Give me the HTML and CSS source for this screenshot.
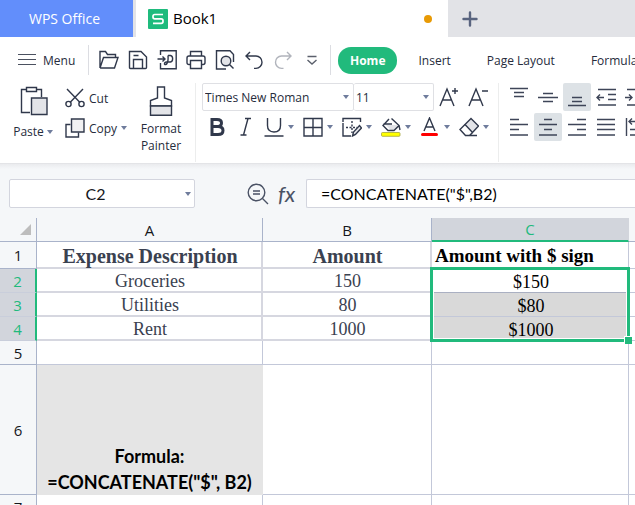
FILE: index.html
```html
<!DOCTYPE html>
<html lang="en">
<head>
<meta charset="utf-8">
<title>Book1 - WPS Office</title>
<link rel="stylesheet" href="styles.css">
</head>
<body>
<header class="tabbar">
  <button class="tab-home">WPS Office</button>
  <div class="tab-doc">
    <svg class="logo" width="20" height="20" viewBox="0 0 20 20"><rect width="20" height="20" rx="1" fill="#1fbb7d"/><path d="M15 5.500H6.800Q5 5.500 5 7.300V8Q5 9.800 6.800 9.800H13.200Q15 9.800 15 11.600V12.600Q15 14.400 13.200 14.400H5" fill="none" stroke="#fff" stroke-width="1.700"/></svg>
    <span>Book1</span>
    <i class="dot"></i>
  </div>
  <button class="tab-add" aria-label="New tab"><svg width="16" height="16" viewBox="0 0 16 16"><path d="M8 1.500V14.500M1.500 8H14.500" stroke="#59647f" stroke-width="2.400" stroke-linecap="round"/></svg></button>
</header>

<nav class="menubar">
  <button class="menu-btn"><svg width="18" height="14" viewBox="0 0 18 14"><path d="M0 1.500H18M0 6.500H18M0 11.500H18" stroke="#4b5160" stroke-width="1.200"/></svg>Menu</button>
  <div class="quick">
    <button aria-label="Open"><svg width="20" height="20" viewBox="0 0 20 20"><path d="M1 18V1.500H6.500L8.500 4.500H16.500V7.500M1 18L4.500 7.500H19L15.500 18H1"/></svg></button>
    <button aria-label="Save"><svg width="20" height="20" viewBox="0 0 20 20"><path d="M1.500 1.500H13L18.500 7V17.500Q18.500 18.500 17.500 18.500H2.500Q1.500 18.500 1.500 17.500ZM5.500 18.500V9.500H14.500V18.500M5.500 5.500H10.500"/></svg></button>
    <button aria-label="Export to PDF"><svg width="20" height="20" viewBox="0 0 20 20"><path d="M3.500 5V.8H19.200V18.800H3.500V13M.5 9H8M5.500 6.500L8 9L5.500 11.500M11 5.500H13.500A2.600 3.300 0 0 1 13.500 12H9.500Q7.500 12 7.500 14Q8.500 15.500 10 13.500Q11.500 11 11 5.500"/></svg></button>
    <button aria-label="Print"><svg width="20" height="20" viewBox="0 0 20 20"><path d="M4.500 6V1.500H15.500V6M4.500 14.500H3Q1 14.500 1 12.500V8Q1 6 3 6H17Q19 6 19 8V12.500Q19 14.500 17 14.500H15.500M4.500 10.500H15.500V18.500H4.500Z"/></svg></button>
    <button aria-label="Print preview"><svg width="20" height="20" viewBox="0 0 20 20"><path d="M11 19H1.500V.8H15L18.500 4.500V12"/><circle cx="11" cy="11" r="4.800" fill="#e3e4e8"/><path d="M14.500 14.500L18.500 18.500"/></svg></button>
    <button aria-label="Undo"><svg width="20" height="20" viewBox="0 0 20 20"><path d="M6 2L2 6L6 10M2 6H12A6 6.200 0 0 1 12 18.400H10"/></svg></button>
    <button aria-label="Redo" class="off"><svg width="20" height="20" viewBox="0 0 20 20"><path d="M14 2L18 6L14 10M18 6H8.500A6 6.200 0 0 0 8.500 18.400H10.500"/></svg></button>
    <button aria-label="More"><svg width="20" height="20" viewBox="0 0 20 20"><path d="M5.500 6.500H14.500M5.500 10L10 14L14.500 10" stroke="#5b606c"/></svg></button>
  </div>
  <div class="menus">
    <a href="#home" class="active">Home</a>
    <a href="#insert">Insert</a>
    <a href="#layout">Page Layout</a>
    <a href="#formulas">Formulas</a>
  </div>
</nav>

<section class="ribbon">
  <div class="group clip">
    <button class="big paste"><svg width="28" height="30" viewBox="0 0 28 30"><path d="M10 26.500H1.500V3.500H6M17 3.500H21.500V11M6.500 1.500H16.500V5.500H6.500Z"/><path d="M11.500 12H27V28.500H11.500Z" fill="#e3e4e8"/></svg><span>Paste<i class="caret"></i></span></button>
    <div class="pair">
      <button><svg width="20" height="20" viewBox="0 0 20 20"><path d="M2 1L15 14.500M18 1L5 14.500"/><circle cx="3.500" cy="16" r="2.600"/><circle cx="16.500" cy="16" r="2.600"/></svg>Cut</button>
      <button><svg width="20" height="20" viewBox="0 0 20 20"><path d="M5.500 6.500H1V19H13.500V14.500"/><path d="M6.500 1H19V14H6.500Z" fill="#f0f0f2"/></svg>Copy<i class="caret"></i></button>
    </div>
    <button class="big painter"><svg width="24" height="30" viewBox="0 0 24 30"><path d="M8.500 1H15.500V12L22.500 14.500V20H1.500V14.500L8.500 12Z"/><path d="M1.500 20H22.500V29.300H1.500Z" fill="#e3e4e8"/></svg><span>Format<br>Painter</span></button>
  </div>
  <div class="group font">
    <div class="row">
      <label class="pick family"><select aria-label="Font"><option>Times New Roman</option></select><i class="caret"></i></label>
      <label class="pick size"><select aria-label="Font size"><option>11</option></select><i class="caret"></i></label>
      <button class="cell" aria-label="Increase font size"><svg width="20" height="20" viewBox="0 0 20 20"><path d="M1 19L8 2L15 19M3.500 13H12.500M13 4H19M16 1V7"/></svg></button>
      <button class="cell" aria-label="Decrease font size"><svg width="20" height="20" viewBox="0 0 20 20"><path d="M1 19L8 2L15 19M3.500 13H12.500M14 4H20"/></svg></button>
    </div>
    <div class="row">
      <button class="cell" aria-label="Bold"><svg width="20" height="20" viewBox="0 0 20 20"><path d="M5 2.500H10Q14.500 2.500 14.500 6Q14.500 9.500 10 9.500H5ZM5 9.500H11Q16 9.500 16 13.500Q16 17.500 11 17.500H5Z" stroke-width="3"/></svg></button>
      <button class="cell" aria-label="Italic"><svg width="20" height="20" viewBox="0 0 20 20"><path d="M9 1.500H15M4.500 18H10.500M12 1.500L7.500 18"/></svg></button>
      <button class="drop" aria-label="Underline"><svg width="20" height="20" viewBox="0 0 20 20"><path d="M3.500 1V8.500Q3.500 15 10 15Q16.500 15 16.500 8.500V1M.5 19H19.500"/></svg><i class="caret"></i></button>
      <button class="drop" aria-label="Borders"><svg width="20" height="20" viewBox="0 0 20 20"><path d="M1 1.500H19V19H1ZM10 1.500V19M1 10.500H19"/></svg><i class="caret"></i></button>
      <button class="drop" aria-label="Draw border"><svg width="20" height="20" viewBox="0 0 20 20"><path d="M1 5V1.500H18.500V5M1 6V19H9"/><path d="M10 4V16M4 10.500H15" stroke-dasharray="2 1.500"/><path d="M10.500 19L11.500 15L17.500 8.500L19.500 11L13.500 17.500Z" fill="#e3e4e8"/></svg><i class="caret"></i></button>
      <button class="drop" aria-label="Fill color"><svg width="20" height="20" viewBox="0 0 20 20"><path d="M5 8H16L17 11L11 14.500Z" fill="#e3e4e8" stroke="none"/><path d="M8 2L2 8.500L7 13.500H13L18 8.500L10.500 1.500M2.500 7H11M18 8.500L19 13"/><rect x=".5" y="15.500" width="18.500" height="3.800" rx="1" fill="#ff0" stroke="#a5a53b" stroke-width=".8"/></svg><i class="caret"></i></button>
      <button class="drop" aria-label="Font color"><svg width="20" height="20" viewBox="0 0 20 20"><path d="M4 14L9.500 1L15 14M6 10H13"/><rect x="1" y="16" width="17" height="3" rx="1.500" fill="red" stroke="none"/></svg><i class="caret"></i></button>
      <button class="drop" aria-label="Eraser"><svg width="20" height="20" viewBox="0 0 20 20"><path d="M12 1.500L19.500 9L13.500 15.500L6 7.500Z" fill="#e3e4e8"/><path d="M6 7.500L1 12.500L6.500 18.500H10.500L13.500 15.500M6.500 18.500H18"/></svg><i class="caret"></i></button>
    </div>
  </div>
  <div class="group align">
    <div class="row">
      <button class="cell" aria-label="Align top"><svg width="20" height="20" viewBox="0 0 20 20"><path d="M1 1.500H19M5 5.500H15M5 9.500H15"/></svg></button>
      <button class="cell" aria-label="Align middle"><svg width="20" height="20" viewBox="0 0 20 20"><path d="M5 6.500H15M0 10.500H20M5 14.500H15"/></svg></button>
      <button class="cell on" aria-label="Align bottom"><svg width="20" height="20" viewBox="0 0 20 20"><path d="M5 10.500H15M5 14.500H15M1 18.500H19"/></svg></button>
      <button class="cell" aria-label="Decrease indent"><svg width="20" height="20" viewBox="0 0 20 20"><path d="M2 2.500H20M12 7.500H20M12 12.500H20M2 18H20M8 10.500H1M4 7.500L1 10.500L4 13.500"/></svg></button>
      <button class="cell" aria-label="Increase indent"><svg width="20" height="20" viewBox="0 0 20 20"><path d="M2 2.500H20M12 7.500H20M12 12.500H20M2 18H20M0 10.500H7M4 7.500L7 10.500L4 13.500"/></svg></button>
    </div>
    <div class="row">
      <button class="cell" aria-label="Align left"><svg width="20" height="20" viewBox="0 0 20 20"><path d="M1 2.500H10M1 7.500H19M1 12.500H10M1 18H19"/></svg></button>
      <button class="cell on" aria-label="Center"><svg width="20" height="20" viewBox="0 0 20 20"><path d="M6 2.500H14M1 7.500H19M6 12.500H14M1 18H19"/></svg></button>
      <button class="cell" aria-label="Align right"><svg width="20" height="20" viewBox="0 0 20 20"><path d="M10 2.500H19M1 7.500H19M10 12.500H19M1 18H19"/></svg></button>
      <button class="cell" aria-label="Justify"><svg width="20" height="20" viewBox="0 0 20 20"><path d="M1 2.500H19M1 7.500H19M1 12.500H19M1 18H19"/></svg></button>
      <button class="cell" aria-label="Distribute"><svg width="20" height="20" viewBox="0 0 20 20"><path d="M1.500 1V19M11 4.500H4M7 1.500L4 4.500L7 7.500M5 12.500H20M5 18H20"/></svg></button>
    </div>
  </div>
</section>

<section class="formulabar">
  <label class="namebox"><input aria-label="Name box" value="C2"><i class="caret"></i></label>
  <button aria-label="Find"><svg width="22" height="22" viewBox="0 0 22 22"><circle cx="9.500" cy="9.500" r="8.300"/><path d="M15.500 15.500L21 21M6 8H13M6 11H13"/></svg></button>
  <button aria-label="Insert function" class="fx">fx</button>
  <input class="formula" aria-label="Formula" value='=CONCATENATE("$",B2)'>
</section>

<main class="sheet">
<table>
  <colgroup><col class="c-num"><col class="c-a"><col class="c-b"><col class="c-c"><col></colgroup>
  <thead>
    <tr><th><i class="corner"></i></th><th>A</th><th>B</th><th class="sel">C</th><th></th></tr>
  </thead>
  <tbody>
    <tr class="head data"><th>1</th><td>Expense Description</td><td>Amount</td><td class="plain">Amount with $ sign</td><td></td></tr>
    <tr class="data"><th class="sel">2</th><td>Groceries</td><td>150</td><td class="plain anchor">$150<i class="selection"></i></td><td></td></tr>
    <tr class="data"><th class="sel">3</th><td>Utilities</td><td>80</td><td class="plain shade">$80</td><td></td></tr>
    <tr class="data"><th class="sel">4</th><td>Rent</td><td>1000</td><td class="plain shade">$1000</td><td></td></tr>
    <tr><th>5</th><td></td><td></td><td></td><td></td></tr>
    <tr class="tall"><th>6</th><td class="note">Formula:<br>=CONCATENATE("$", B2)</td><td></td><td></td><td></td></tr>
    <tr><th>7</th><td></td><td></td><td></td><td></td></tr>
  </tbody>
</table>
</main>
</body>
</html>
```
FILE: styles.css
```css
* { box-sizing: border-box; }
body {
  margin: 0;
  height: 100vh;
  overflow: hidden;
  background: #fff;
  color: #262c3c;
  font: 12px/17px "Open Sans", "Noto Sans", sans-serif;
}
button, input, select { font: inherit; color: inherit; }
button {
  display: flex;
  flex: none;
  align-items: center;
  padding: 0;
  border: 0;
  background: none;
  white-space: nowrap;
}
svg { flex: none; display: block; fill: none; stroke: #30384b; stroke-width: 1.4; }
.logo, .tab-add svg { stroke: none; }
.caret {
  flex: none;
  border: 3px solid transparent;
  border-top: 4px solid #6f7c9c;
  border-bottom: 0;
}

.tabbar { display: flex; height: 37px; background: #e2e3e7; }
.tab-home {
  width: 133px;
  justify-content: center;
  padding-right: 4px;
  background: #628efb;
  color: #fff;
  font-size: 14px;
}
.tab-doc {
  display: flex;
  align-items: center;
  gap: 5px;
  width: 312px;
  margin-left: 3px;
  padding: 0 16px 0 12px;
  background: #fff;
  color: #000;
  font-size: 15px;
}
.dot { width: 8px; height: 8px; margin-left: auto; border-radius: 50%; background: #e89a05; }
.tab-add { margin-left: 14px; }

.menubar { display: flex; align-items: center; height: 46px; }
.menu-btn { gap: 7px; width: 89px; height: 30px; padding-left: 18px; border-right: 1px solid #dcdde2; }
.quick { display: flex; flex: none; height: 30px; padding: 0 4px 0 5px; border-right: 1px solid #dcdde2; }
.quick button { width: 29px; justify-content: center; }
.off svg { stroke: #b1b4bc; }
.menus { display: flex; align-items: center; }
.menus a { margin-right: 36px; color: inherit; text-decoration: none; white-space: nowrap; }
.menus .active {
  margin: 0 21px 0 7px;
  padding: 5px 12px;
  border-radius: 13px;
  background: #21ba7c;
  color: #fff;
  font-weight: 700;
}

.ribbon {
  display: flex;
  height: 81px;
  border-bottom: 1px solid #e3e4e7;
}
.group { flex: none; height: 79px; border-right: 1px solid #eceded; }
.group:last-child { border: 0; }
.clip { display: flex; align-items: flex-start; width: 196px; padding-left: 13px; }
.big { flex-direction: column; padding-top: 3px; gap: 6px; }
.big span { display: flex; align-items: center; gap: 3px; }
.paste { width: 40px; gap: 7px; }
.paste svg { margin-left: 2px; }
.painter { width: 44px; gap: 4px; margin-left: 9px; }
.painter span { display: block; }
.pair { width: 65px; margin-left: 12px; }
.pair button { height: 30px; gap: 4px; }
.font { width: 303px; padding-left: 6px; }
.row { display: flex; gap: 1px; margin-bottom: 2px; }
.font .row { gap: 0; }
.pick { display: flex; align-items: center; height: 28px; padding-right: 4px; border: 1px solid #dfe0e4; border-radius: 2px; }
.pick select { flex: 1; min-width: 0; padding: 0 2px; border: 0; background: none; appearance: none; }
.family { width: 152px; }
.size { width: 80px; border-left: 0; }
.cell { width: 28px; height: 28px; justify-content: center; border-radius: 2px; }
.font .cell { width: 29px; }
.on { background: #dde2e6; }
.drop { width: 39px; height: 28px; padding-left: 4px; gap: 4px; }
.align { padding-left: 6px; }
.align svg { stroke: #3e4558; }

.formulabar {
  display: flex;
  align-items: center;
  height: 54px;
  padding: 5px 0 0 9px;
  background: linear-gradient(#eaebee, #f5f7f9 5px);
}
.formulabar svg { stroke: #4a5265; }
.namebox {
  display: flex;
  flex: none;
  align-items: center;
  width: 186px;
  height: 29px;
  margin-right: 52px;
  padding-right: 3px;
  border: 1px solid #d3d5de;
  border-radius: 2px;
  background: #fff;
}
.namebox input { flex: 1; min-width: 0; padding: 0 4px 0 0; border: 0; background: none; text-align: center; color: #15171c; font: 16px Lato, sans-serif; }
.fx { width: 28px; margin-left: 9px; font: italic 22px/28px Lato, sans-serif; color: #4a5265; }
.formula {
  flex: 1;
  min-width: 0;
  height: 29px;
  padding: 0 14px;
  border: 1px solid #d3d5de;
  border-right: 0;
  border-radius: 2px 0 0 2px;
  background: #fff;
  color: #000;
  font: 16px Lato, sans-serif;
}

table { width: 100%; table-layout: fixed; border-collapse: separate; border-spacing: 0; }
.c-num { width: 37px; }
.c-a { width: 226px; }
.c-b { width: 169px; }
.c-c { width: 197px; }
tr { height: 24px; }
th, td { padding: 0; border: solid #c3c8d9; border-width: 0 1px 1px 0; text-align: center; white-space: nowrap; }
th {
  border-color: #a9b3ca;
  background: #f5f7f9;
  color: #15171c;
  font: 15px/20px "Open Sans", sans-serif;
}
th:last-child, td:last-child { border-right: 0; }
th.sel { background: #d2d5dc; color: #21ba7c; }
thead .sel { border-bottom: 2px solid #21ba7c; border-right-color: #d2d5dc; }
tbody .sel { border-right: 2px solid #21ba7c; border-bottom-color: #c9cedb; }
.corner {
  display: block;
  width: 0;
  margin-left: 20px;
  border-top: 11px solid transparent;
  border-right: 11px solid #bdbdbd;
}
.data { font: 18px/20px "Liberation Serif", serif; }
.data td { padding: 2px 0 0 2px; color: #3a4150; border-color: #d6d7e0; border-width: 0 2px 2px 0; }
.data .plain, .data td:last-child { color: #000; border-color: #c3c8d9; border-width: 0 1px 1px 0; }
.data td:last-child { border-right: 0; }
.head { height: 27px; font-size: 20px; font-weight: 700; }
.head .plain { padding-left: 3px; text-align: left; font-size: 19px; }
.data .shade { background: #d9d9d9; }
.data .anchor { position: relative; border-bottom-color: #aab0c2; }
.selection {
  position: absolute;
  top: -2px;
  left: -2px;
  right: -2px;
  height: 75px;
  border: 3px solid #21ba7c;
  box-shadow: inset 0 0 0 1px #fff;
}
.selection::after {
  content: "";
  position: absolute;
  right: -5px;
  bottom: -5px;
  width: 7px;
  height: 7px;
  border: solid #fff;
  border-width: 1px 0 0 1px;
  background: #21ba7c;
}
.tall { height: 130px; }
.note {
  border-color: #e5e5e5;
  border-bottom: 0;
  background: #e5e5e5;
  color: #000;
  vertical-align: bottom;
  font: 700 18px/26px Lato, sans-serif;
}
```
